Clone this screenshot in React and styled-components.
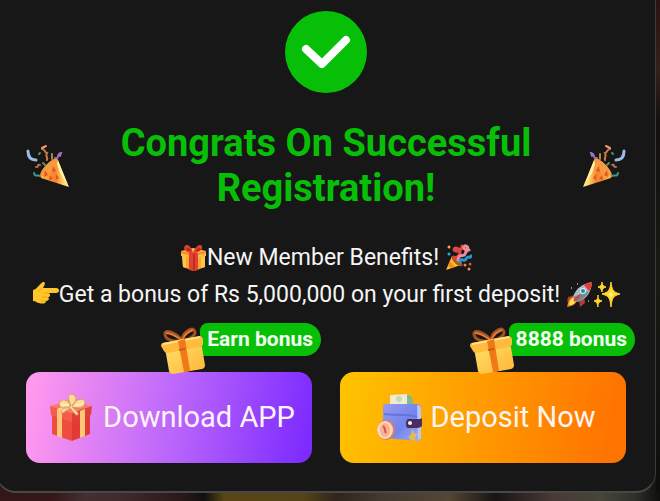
import React from 'react';
import styled, { createGlobalStyle } from 'styled-components';

const GlobalStyle = createGlobalStyle`
  * { box-sizing: border-box; }
  html { min-height: 100%; background: #171515; }
  body {
    margin: 0;
    overflow-x: hidden;
    font-family: Roboto, "Noto Sans", sans-serif;
    color: #f5f5f5;
  }
`;

const Backdrop = styled.div`
  min-height: 100vh;
  padding-right: 4px;
  background:
    linear-gradient(180deg, #2a1210 0%, #34201a 14%, #11100f 25%, #181912 55%, #0e0e0d 100%) right top / 4px calc(100% - 9px) no-repeat,
    linear-gradient(90deg, #351617 0%, #351718 8%, #443031 13%, #40292a 19%, #291718 28%, #11100f 31%, #594615 34%, #544416 46%, #30251d 51%, #443a31 58%, #534633 68%, #181514 75%, #493b36 84%, #45453a 91%, #30322a 96%, #0e0e0d 100%);
`;

const Card = styled.main`
  margin-left: -4px;
  padding: 11px 29px 28px;
  background: #171717;
  border-bottom: 2px solid #484848;
  border-right: 1px solid #3b3b3b;
  border-left: 1px solid #3b3b3b;
  border-radius: 0 0 20px 20px;
`;

const SuccessIcon = styled.svg`
  display: block;
  width: 82px;
  height: 82px;
  margin: 0 auto;
`;

const Header = styled.header`
  display: grid;
  grid-template-columns: 44px 1fr 44px;
  align-items: center;
  margin-top: 28px;
`;

const Title = styled.h1`
  margin: 0;
  font-size: 38px;
  font-weight: 700;
  line-height: 45px;
  text-align: center;
  color: #08bf08;
`;

const Popper = styled.svg`
  width: 44px;
  height: 46px;
  transform: ${(p) => (p.$mirrored ? 'scaleX(-1)' : 'none')};
`;

const Benefits = styled.section`
  margin: 28px -10px 0;
`;

const BenefitLine = styled.p`
  display: flex;
  align-items: center;
  justify-content: center;
  margin: 0;
  font-size: 23px;
  line-height: 37px;
`;

const Emoji = styled.svg`
  flex: none;
  width: 27px;
  height: 27px;
  margin-left: ${(p) => (p.$spaced ? '6px' : '0')};
`;

const Actions = styled.div`
  display: grid;
  grid-template-columns: 1fr 1fr;
  gap: 28px;
  margin-top: 59px;
`;

const Action = styled.div`
  position: relative;
`;

const ActionButton = styled.button`
  display: flex;
  align-items: center;
  justify-content: center;
  gap: 8px;
  width: 100%;
  height: 91px;
  padding: 0 0 2px 4px;
  border: 0;
  border-radius: 14px;
  background: ${(p) => (p.$tone === 'deposit'
    ? 'linear-gradient(100deg, #ffc400 0%, #ff9900 50%, #ff7300 94%)'
    : 'linear-gradient(100deg, #ff98ee 3%, #bd68fb 50%, #7d2cff 97%)')};
  color: #fff4f4;
  font: 400 29px/36px Roboto, sans-serif;
  white-space: nowrap;
  cursor: pointer;
`;

const ButtonIcon = styled.svg`
  flex: none;
  width: 48px;
  height: 50px;
`;

const Badge = styled.span`
  position: absolute;
  top: -49px;
  right: -9px;
  display: flex;
  align-items: center;
  height: 33px;
  padding: 0 8px 0 7px;
  border-radius: 8px 17px 17px 0;
  background: #08bf08;
  color: #f2fff0;
  font-size: 21px;
  font-weight: 700;
  line-height: 33px;
  white-space: nowrap;
  pointer-events: none;
`;

const BadgeGift = styled.svg`
  position: absolute;
  top: 2px;
  left: -40px;
  width: 48px;
  height: 50px;
`;

function PartyCone({ mirrored }) {
  return (
    <Popper viewBox="0 0 44 46" $mirrored={mirrored} aria-hidden="true">
      <defs>
        <linearGradient id={mirrored ? 'coneR' : 'coneL'} x1="0" y1="0.5" x2="1" y2="0.4">
          <stop offset="0" stopColor="#ffb34a" />
          <stop offset="0.5" stopColor="#f5812c" />
          <stop offset="0.75" stopColor="#ffd36a" />
          <stop offset="1" stopColor="#fff0a0" />
        </linearGradient>
      </defs>
      <path d="M31 15 43 44 15 35C13 29 24 16 31 15Z" fill={`url(#${mirrored ? 'coneR' : 'coneL'})`} />
      <path d="M31 15C25 16 13 27 14 34L23 31C28 27 33 22 31 15Z" fill="#f59a40" />
      <path d="m19 27 3 5-4 2Zm5 5 3 4-4 1Zm3-9 3 5-4 1Zm3 8 3 4-3 2Z" fill="#e3571f" />
      <path d="m32 17 10 26-8-13-3-9Z" fill="#fff3a3" />
      <g fill="none" strokeLinecap="round" strokeWidth="2">
        <path d="M2 8C2 14 5 17 10 17" stroke="#9bbce8" strokeWidth="3" />
        <path d="M16 6c3 0 2 3 5 4-2 3 1 4 0 7" stroke="#c77c46" />
        <path d="m16 5 4-2" stroke="#f49a70" />
        <path d="M26 11v5" stroke="#a58d34" />
        <path d="M29 15c5 1 1-4 6-5l-1 3" stroke="#a36cc6" />
        <path d="M10 24c4 0 0-3 4-2" stroke="#b56750" />
        <path d="M8 30c1 5 3 1 6 3" stroke="#409c85" />
        <path d="m13 11 1-1M17 20l2 2" stroke="#4f955f" />
      </g>
    </Popper>
  );
}

function PresentEmoji() {
  return (
    <Emoji viewBox="0 0 27 27" role="img" aria-label="gift">
      <path d="M2 10h23v13l-11 4-11-4Z" fill="#f7a92f" />
      <path d="M2 11h4v13l-3-1ZM21 11h4v12l-4 1Z" fill="#ffc548" />
      <path d="M1 7 13 4l13 3v5l-13 3-12-3Z" fill="#ffb93f" />
      <path d="m1 7 12 3 13-3v2l-13 3L1 9Z" fill="#f08b2c" />
      <path d="M9 9h9v17l-4 1-5-1Z" fill="#e2402c" />
      <path d="M13 10h2v17h-2Z" fill="#c22c23" />
      <path d="M13 9C2 9 3 1 7 1s6 8 6 8Zm0 0c10 0 11-8 7-8s-7 8-7 8Z" fill="#e33d2c" />
      <path d="M7 4c2 0 3 2 4 3-3 0-5-2-4-3Zm13 0c-2 0-3 2-4 3 3 0 5-2 4-3Z" fill="#9c2a20" />
    </Emoji>
  );
}

function ConfettiEmoji() {
  return (
    <Emoji viewBox="0 0 27 27" $spaced role="img" aria-label="party popper">
      <path d="m7 12 9 9L1 26Z" fill="#ffbd27" />
      <path d="M5 17l5 6-4 1-3-2Z" fill="#f28a22" />
      <ellipse cx="12" cy="17" rx="7" ry="3" transform="rotate(45 12 17)" fill="#ad571b" />
      <g fill="none" strokeLinecap="round" strokeWidth="3">
        <path d="M10 14c6-2 7-9 1-10-3 0-2 3 0 3 4 1 7-4 6-5" stroke="#df4546" />
        <path d="M13 16c1-8 6-2 7-6s3-2 3-5-3-4-4-2 3 4 5 3" stroke="#ed8b9d" />
        <path d="M15 18c1-6 4 1 6-3s4 0 5-3" stroke="#2896d1" />
      </g>
      <g>
        <circle cx="4" cy="3" r="1.5" fill="#f8b422" />
        <circle cx="4" cy="10" r="1.5" fill="#31a6df" />
        <circle cx="20" cy="21" r="1.5" fill="#ef8c22" />
        <circle cx="25" cy="20" r="1.5" fill="#e34b4b" />
        <circle cx="24" cy="25" r="1.5" fill="#e69072" />
      </g>
    </Emoji>
  );
}

function PointingEmoji() {
  return (
    <Emoji viewBox="0 3 27 27" role="img" aria-label="pointing right">
      <path d="M1 12c5-1 8-9 11-8 2 1 0 4-1 6h13c4 0 4 5 0 5h-7c2 2 1 4-1 4 2 2 0 4-2 4 0 3-4 3-7 2-2 0-3-2-6-2Z" fill="#ffc629" />
      <path d="M12 15h5M10 19h6M9 23h5M10 10c-1 2-2 3-4 3" fill="none" stroke="#eda520" />
    </Emoji>
  );
}

function RocketEmoji() {
  return (
    <Emoji viewBox="0 0 27 27" $spaced role="img" aria-label="rocket">
      <path d="M9 14 2 16l-1 5 7-3Zm4 4 1 8 5-4-1-8Z" fill="#b83a31" />
      <path d="M7 16C1 18 2 25 1 26c6-1 9-3 10-7Z" fill="#f48c24" />
      <path d="M7 17c-4 2-3 5-4 7 4 0 6-2 7-5Z" fill="#ffe15b" />
      <path d="M7 16C10 7 16 3 26 1c-1 11-5 17-15 20Z" fill="#aebac2" />
      <path d="M18 4c3-2 8-3 8-3s0 6-3 9Z" fill="#e33c33" />
      <path d="M7 16 23 10c-3 6-6 9-12 11Z" fill="#728994" />
      <circle cx="17" cy="10" r="3" fill="#e0edf1" />
      <circle cx="17" cy="10" r="2" fill="#2785b2" />
      <path d="m14 14-6 6" stroke="#d93d34" strokeWidth="2" />
      <path d="M5 7h1M11 3h1M22 20h1" stroke="#899399" strokeWidth="2" />
    </Emoji>
  );
}

function SparklesEmoji() {
  return (
    <Emoji viewBox="0 0 27 27" role="img" aria-label="sparkles">
      <path d="M18 1c1 8 2 10 9 12-7 2-8 4-9 13-1-9-2-11-9-13 7-2 8-4 9-12ZM9 1c0 3 1 4 4 5-3 1-4 2-4 5-1-3-1-4-4-5 3-1 4-2 4-5ZM5 14c0 4 1 5 4 6-3 1-4 2-4 6-1-4-1-5-4-6 3-1 4-2 4-6Z" fill="#ffd52a" stroke="#ffd52a" strokeLinejoin="round" />
      <path d="M18 8c0 4 1 5 4 5-3 1-4 2-4 6-1-4-1-5-4-6 3 0 4-1 4-5Z" fill="#fff27d" />
    </Emoji>
  );
}

function GoldGift({ id }) {
  return (
    <BadgeGift viewBox="0 0 48 50" aria-hidden="true">
      <defs>
        <linearGradient id={id} x1="0" y1="0" x2="1" y2="1">
          <stop stopColor="#ffe26d" />
          <stop offset="1" stopColor="#ffb536" />
        </linearGradient>
      </defs>
      <path d="M22 16C14 17 5 15 5 9c0-6 13 0 17 7 0-8 9-14 12-11 4 4-4 10-12 11Z" fill="none" stroke="#a45122" strokeWidth="3" />
      <path d="M6 8c5 0 10 3 15 7M23 14c2-5 7-8 10-9" fill="none" stroke="#e57a31" strokeWidth="2" />
      <path d="m5 23 36-6 4 23q0 3-3 4l-29 5q-3 0-4-3Z" fill={`url(#${id})`} />
      <path d="m3 18 37-7q2 0 3 3v5q0 2-3 3L7 28q-2 0-3-2l-3-5q0-3 2-3Z" fill="#ffbb3d" />
      <path d="m3 19 37-7" stroke="#ffe184" strokeWidth="2" />
      <path d="m18 16 7-2 5 32-6 1Z" fill="#f17819" />
      <path d="m19 25 6-1" stroke="#c95d17" strokeWidth="2" />
    </BadgeGift>
  );
}

function RedGift() {
  return (
    <ButtonIcon viewBox="0 0 48 50" aria-hidden="true">
      <path d="m5 19 20 6v24L5 42Z" fill="#ef4b3e" />
      <path d="m43 19-18 6v24l18-7Z" fill="#e33a35" />
      <path d="m3 14 21-6 21 6-20 7Z" fill="#ff7865" />
      <path d="m3 14 22 7v9L4 23Z" fill="#f65c4b" />
      <path d="m45 14-20 7v9l19-7Z" fill="#e04036" />
      <path d="m10 17 5 2v27l-5-2ZM33 19l5-2v27l-5 2Z" fill="#ffc879" />
      <path d="m10 17 21-9 6 3-22 9Z" fill="#ffd58e" />
      <path d="M23 15C13 19 9 11 15 8c4-1 8 3 9 6-4-9-3-14 3-11 4 2 1 9-2 11 4-8 14-9 13-3s-8 5-13 4c7 6 8 8 4 8l-6-7-7 5c-5 0 0-6 7-8Z" fill="#ffdb96" stroke="#dc9a60" />
      <path d="M14 12c3 2 6 1 8 1M28 13c3 0 6 0 8-2" fill="none" stroke="#fff0b7" strokeWidth="2" />
    </ButtonIcon>
  );
}

function Wallet() {
  return (
    <ButtonIcon viewBox="0 0 48 50" aria-hidden="true">
      <defs>
        <linearGradient id="wallet" x1="0" y1="0" x2="1" y2="1">
          <stop stopColor="#9b9bef" />
          <stop offset="0.55" stopColor="#7184eb" />
          <stop offset="1" stopColor="#a2aefa" />
        </linearGradient>
      </defs>
      <path d="m15 3 18-1 3 12H15Z" fill="#f1ecd1" />
      <path d="m32 2 5 3 2 11h-7Z" fill="#83b78e" />
      <circle cx="24" cy="7" r="3" fill="#bfdfae" />
      <path d="M9 12h32q5 0 5 5v29q0 3-4 3L12 46q-4-1-4-5V14Z" fill="url(#wallet)" />
      <path d="M42 13q4 0 4 4v29l-3 2Z" fill="#b8c5fb" />
      <path d="M9 22c12 2 22-1 33 3" fill="none" stroke="#6475d8" strokeWidth="2" />
      <path d="M33 27h11q3 0 3-2v9q-2 2-5 2h-9q-2 0-2-4t2-5Z" fill="#4a2b63" />
      <circle cx="35" cy="31" r="2" fill="#fff2e1" />
      <ellipse cx="11" cy="38" rx="9" ry="10" fill="#df7c61" />
      <ellipse cx="10" cy="38" rx="8" ry="9" fill="#ffd6b8" />
      <ellipse cx="10" cy="38" rx="5" ry="7" fill="#f6b392" />
      <path d="M8 34c3 2 1 4 3 7" stroke="#e34f50" strokeWidth="2" fill="none" />
      <path d="m37 37 2 4 4 1-3 3 1 4-5-1-3-3 3-2Z" fill="#e1bc54" />
    </ButtonIcon>
  );
}

export default function App() {
  return (
    <>
      <GlobalStyle />
      <Backdrop>
        <Card>
          <SuccessIcon viewBox="0 0 82 82" role="img" aria-label="Success">
            <circle cx="41" cy="41" r="41" fill="#08bf08" />
            <path d="m21 38 16 15 24-24" fill="none" stroke="#fff" strokeWidth="8" strokeLinecap="round" strokeLinejoin="round" />
          </SuccessIcon>
          <Header>
            <PartyCone />
            <Title>Congrats On Successful Registration!</Title>
            <PartyCone mirrored />
          </Header>
          <Benefits>
            <BenefitLine>
              <PresentEmoji />
              <span>New Member Benefits!</span>
              <ConfettiEmoji />
            </BenefitLine>
            <BenefitLine>
              <PointingEmoji />
              <span>Get a bonus of Rs 5,000,000 on your first deposit!</span>
              <RocketEmoji />
              <SparklesEmoji />
            </BenefitLine>
          </Benefits>
          <Actions>
            <Action>
              <ActionButton type="button" $tone="download" aria-describedby="earn-bonus">
                <RedGift />
                Download APP
              </ActionButton>
              <Badge id="earn-bonus">
                <GoldGift id="earnGift" />
                Earn bonus
              </Badge>
            </Action>
            <Action>
              <ActionButton type="button" $tone="deposit" aria-describedby="deposit-bonus">
                <Wallet />
                Deposit Now
              </ActionButton>
              <Badge id="deposit-bonus">
                <GoldGift id="depositGift" />
                8888 bonus
              </Badge>
            </Action>
          </Actions>
        </Card>
      </Backdrop>
    </>
  );
}
